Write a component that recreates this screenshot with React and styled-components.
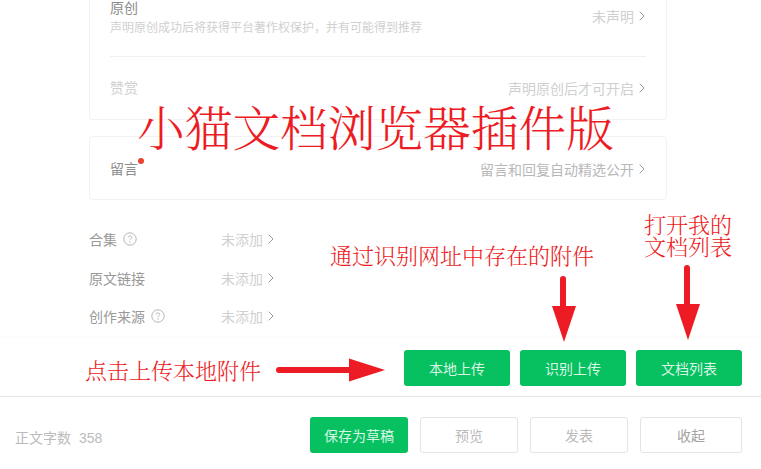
import React from "react";
import styled, { createGlobalStyle } from "styled-components";

const GlobalStyle = createGlobalStyle`
  html, body {
    margin: 0;
    padding: 0;
    background: #fff;
  }
  body {
    font-family: "Liberation Sans", "Noto Sans CJK SC", sans-serif;
  }
`;

function Chevron() {
  return (
    <ChevronSvg viewBox="0 0 6 10" width="6" height="10">
      <path d="M0.7 0.7L5 5L0.7 9.3" fill="none" stroke="#999" strokeWidth="1" />
    </ChevronSvg>
  );
}

function HelpIcon() {
  return (
    <HelpSvg viewBox="0 0 14 14" width="14" height="14">
      <circle cx="7" cy="7" r="6.2" fill="none" stroke="#b5b5b5" strokeWidth="1" />
      <path
        d="M5.2 5.5C5.2 4.5 6 3.9 7 3.9C8 3.9 8.8 4.5 8.8 5.4C8.8 6.6 7 6.7 7 8.2"
        fill="none"
        stroke="#b5b5b5"
        strokeWidth="1"
      />
      <circle cx="7" cy="10" r="0.7" fill="#b5b5b5" />
    </HelpSvg>
  );
}

function ArrowRight() {
  return (
    <svg viewBox="0 0 110 24" width="110" height="24">
      <path d="M3 12H76" stroke="#ed1c24" strokeWidth="6" strokeLinecap="round" />
      <path d="M73 0.5L109 12L73 23.5Z" fill="#ed1c24" />
    </svg>
  );
}

function ArrowDown({ length }) {
  return (
    <svg viewBox={`0 0 24 ${length}`} width="24" height={length}>
      <path d={`M11 3V${length - 30}`} stroke="#ed1c24" strokeWidth="6" strokeLinecap="round" />
      <path d={`M0 ${length - 36}H24L12 ${length}Z`} fill="#ed1c24" />
    </svg>
  );
}

const metaRows = [
  { label: "合集", help: true },
  { label: "原文链接" },
  { label: "创作来源", help: true },
];

function App() {
  return (
    <Page>
      <GlobalStyle />
      <ScrollArea>
        <OpenCard>
          <ClaimRow>
            <ClaimText>
              <RowTitle>原创</RowTitle>
              <RowDesc>{"声明原创成功后将获得平台著作权保护\uFF0C并有可能得到推荐"}</RowDesc>
            </ClaimText>
            <ClaimValue>
              未声明
              <Chevron />
            </ClaimValue>
          </ClaimRow>
          <RewardRow>
            <RowTitle $muted>赞赏</RowTitle>
            <RowValue>
              声明原创后才可开启
              <Chevron />
            </RowValue>
          </RewardRow>
        </OpenCard>
        <Card>
          <CommentRow>
            <CommentTitle>留言</CommentTitle>
            <RowValue $dark>
              留言和回复自动精选公开
              <Chevron />
            </RowValue>
          </CommentRow>
        </Card>
        <MetaList>
          {metaRows.map((row) => (
            <MetaRow key={row.label}>
              <MetaLabel>
                {row.label}
                {row.help && <HelpIcon />}
              </MetaLabel>
              <MetaValue>
                未添加
                <Chevron />
              </MetaValue>
            </MetaRow>
          ))}
        </MetaList>
      </ScrollArea>

      <UploadBar>
        <GreenButton $wide>本地上传</GreenButton>
        <GreenButton $wide>识别上传</GreenButton>
        <GreenButton $wide>文档列表</GreenButton>
      </UploadBar>

      <Footer>
        <WordCount>
          正文字数<Count>358</Count>
        </WordCount>
        <FooterActions>
          <GreenButton>保存为草稿</GreenButton>
          <PlainButton>预览</PlainButton>
          <PlainButton>发表</PlainButton>
          <PlainButton $last>收起</PlainButton>
        </FooterActions>
      </Footer>

      <BigTitle>小猫文档浏览器插件版</BigTitle>
      <Note $x={330} $y={244}>通过识别网址中存在的附件</Note>
      <Note $x={644} $y={213}>
        打开我的
        <br />
        文档列表
      </Note>
      <Note $x={85} $y={359}>点击上传本地附件</Note>
      <Pointer $x={276} $y={358}>
        <ArrowRight />
      </Pointer>
      <Pointer $x={552} $y={276}>
        <ArrowDown length={66} />
      </Pointer>
      <Pointer $x={676} $y={265}>
        <ArrowDown length={75} />
      </Pointer>
    </Page>
  );
}

export default App;

const Page = styled.div`
  position: relative;
  width: 761px;
  height: 469px;
  overflow: hidden;
  background: #fff;
`;
const ScrollArea = styled.div`
  height: 338px;
  padding: 0 94px 0 89px;
  overflow: hidden;
`;
const Card = styled.div`
  width: 578px;
  box-sizing: border-box;
  border: 1px solid #f2f2f2;
  border-radius: 4px;
  padding: 0 20px;
`;
const OpenCard = styled(Card)`
  height: 120px;
  border-top: 0;
  border-radius: 0 0 4px 4px;
  margin-bottom: 16px;
`;
const ClaimRow = styled.div`
  display: flex;
  justify-content: space-between;
  align-items: flex-start;
  height: 56px;
  border-bottom: 1px solid #f0f0f0;
`;
const ClaimText = styled.div`
  margin-top: -2px;
`;
const RewardRow = styled.div`
  display: flex;
  justify-content: space-between;
  align-items: center;
  height: 62px;
`;
const CommentRow = styled.div`
  display: flex;
  justify-content: space-between;
  align-items: center;
  height: 62px;
  padding-top: 2px;
  box-sizing: border-box;
`;
const RowTitle = styled.div`
  font-size: 14px;
  line-height: 20px;
  color: ${(p) => (p.$muted ? "#cfcfcf" : "#8c8c8c")};
`;
const CommentTitle = styled(RowTitle)`
  position: relative;
  &::after {
    content: "";
    position: absolute;
    right: -6px;
    top: -1px;
    width: 6px;
    height: 6px;
    border-radius: 50%;
    background: #e8432e;
  }
`;
const RowDesc = styled.div`
  font-size: 12px;
  line-height: 20px;
  color: #d0d0d0;
`;
const RowValue = styled.div`
  display: flex;
  align-items: center;
  gap: 5px;
  padding-right: 1px;
  font-size: 14px;
  color: ${(p) => (p.$dark ? "#b8b8b8" : "#d0d0d0")};
`;
const ClaimValue = styled(RowValue)`
  margin-top: 6px;
`;
const ChevronSvg = styled.svg`
  flex: none;
`;
const HelpSvg = styled.svg`
  flex: none;
  margin-left: 6px;
`;
const MetaList = styled.div`
  margin-top: 20px;
`;
const MetaRow = styled.div`
  display: grid;
  grid-template-columns: 132px auto;
  justify-content: start;
  align-items: center;
  height: 38.5px;
`;
const MetaLabel = styled.div`
  display: flex;
  align-items: center;
  font-size: 14px;
  color: #999;
`;
const MetaValue = styled.div`
  display: flex;
  align-items: center;
  gap: 5px;
  font-size: 14px;
  color: #d0d0d0;
`;
const UploadBar = styled.div`
  display: flex;
  justify-content: flex-end;
  align-items: center;
  gap: 10px;
  height: 58px;
  box-sizing: border-box;
  padding: 2px 19px 0 0;
  box-shadow: 0 -1px 2px rgba(0, 0, 0, 0.03);
`;
const GreenButton = styled.div`
  display: flex;
  align-items: center;
  justify-content: center;
  width: ${(p) => (p.$wide ? "106px" : "98px")};
  height: 36px;
  border-radius: 3px;
  background: #07c160;
  color: #d8f4e4;
  font-size: 14px;
`;
const Footer = styled.div`
  display: flex;
  justify-content: space-between;
  align-items: center;
  height: 73px;
  box-sizing: border-box;
  border-top: 1px solid #e6e6e6;
  padding: 4px 19px 0 15px;
`;
const WordCount = styled.div`
  margin-top: 3px;
  font-size: 14px;
  color: #bbb;
`;
const Count = styled.span`
  margin-left: 8px;
`;
const FooterActions = styled.div`
  display: flex;
  gap: 12px;
`;
const PlainButton = styled.div`
  display: flex;
  align-items: center;
  justify-content: center;
  box-sizing: border-box;
  width: ${(p) => (p.$last ? "102px" : "98px")};
  height: 36px;
  border: 1px solid #e4e4e4;
  border-radius: 3px;
  font-size: 14px;
  color: ${(p) => (p.$last ? "#a3a3a3" : "#bbb")};
`;
const BigTitle = styled.div`
  position: absolute;
  left: 137px;
  top: 98px;
  font-family: "Noto Serif CJK SC", "Noto Sans CJK SC", serif;
  font-size: 47.7px;
  line-height: 56px;
  font-weight: 300;
  color: #ed1c24;
  white-space: nowrap;
`;
const Note = styled.div`
  position: absolute;
  left: ${(p) => p.$x}px;
  top: ${(p) => p.$y}px;
  font-family: "Noto Serif CJK SC", "Noto Sans CJK SC", serif;
  font-size: 22px;
  line-height: 22px;
  font-weight: 300;
  color: #ed1c24;
  white-space: nowrap;
`;
const Pointer = styled.div`
  position: absolute;
  left: ${(p) => p.$x}px;
  top: ${(p) => p.$y}px;
  line-height: 0;
`;
